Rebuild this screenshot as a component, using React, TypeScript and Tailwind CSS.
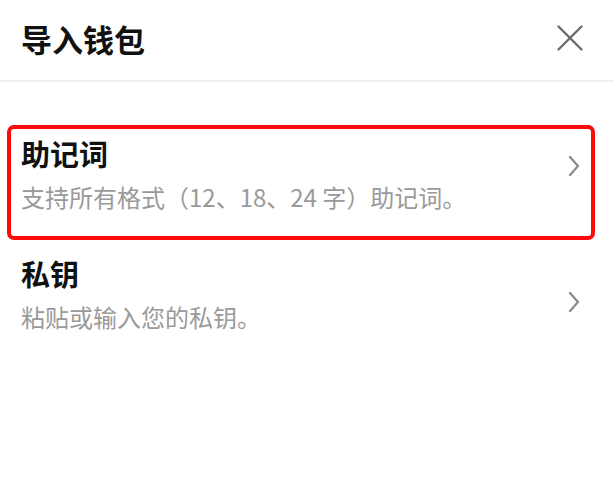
import React from 'react';

const font = { fontFamily: '"Noto Sans CJK SC", "Noto Sans", sans-serif' };

const Chevron = ({ className }: { className?: string }) => (
  <svg width="12" height="22" viewBox="0 0 12 22" fill="none" className={className}>
    <path d="M2 2l8 9-8 9" stroke="#8a8a8a" strokeWidth="2.2" strokeLinecap="round" strokeLinejoin="round" />
  </svg>
);

const App = () => {
  return (
    <div className="w-[614px] h-[500px] bg-white overflow-hidden" style={font}>
      {/* 顶部标题栏 */}
      <div className="h-[82px] flex items-center justify-between pl-[21px] pr-[31px] border-b-2 border-[#f1f1f1]">
        <h1 className="text-[31px] leading-[31px] font-bold text-[#111] mt-[-3px]">导入钱包</h1>
        <svg width="26" height="26" viewBox="0 0 26 26" className="mt-[-5px]">
          <path d="M1.5 1.5l23 23M24.5 1.5l-23 23" stroke="#6b6b6b" strokeWidth="2.4" strokeLinecap="round" />
        </svg>
      </div>

      {/* 助记词（红框标注） */}
      <div className="mt-[43px] ml-[7px] mr-[19px] border-4 border-[#ff0a0a] rounded-[7px] flex justify-between pl-[10px] pr-[11px] pt-[10px] pb-[27px]">
        <div>
          <div className="text-[29px] leading-[29px] font-bold text-[#111]">助记词</div>
          <div className="mt-[17px] text-[24px] leading-[24px] text-[#9a9a9a]">支持所有格式（12、18、24 字）助记词。</div>
        </div>
        <Chevron className="mt-[16px]" />
      </div>

      {/* 私钥 */}
      <div className="ml-[7px] mr-[19px] border-4 border-transparent flex justify-between pl-[10px] pr-[11px] pt-[15px]">
        <div>
          <div className="text-[29px] leading-[29px] font-bold text-[#111]">私钥</div>
          <div className="mt-[17px] text-[24px] leading-[24px] text-[#9a9a9a]">粘贴或输入您的私钥。</div>
        </div>
        <Chevron className="mt-[32px]" />
      </div>
    </div>
  );
};

export default App;
